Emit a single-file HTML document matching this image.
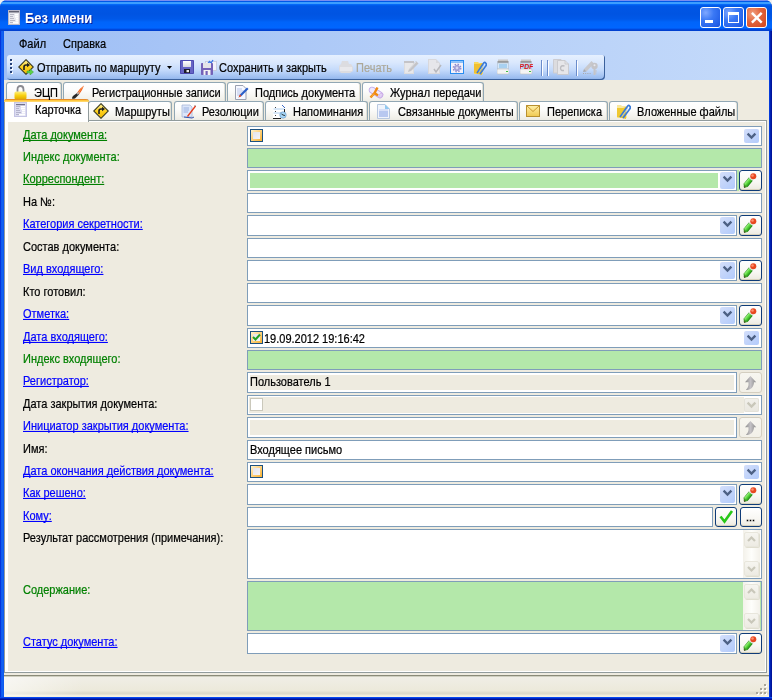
<!DOCTYPE html><html><head><meta charset="utf-8"><style>
html,body{margin:0;padding:0;}
body{width:772px;height:700px;overflow:hidden;position:relative;font-family:"Liberation Sans", sans-serif;font-size:11px;background:#F0F0F0;}
.lb{position:absolute;white-space:nowrap;font-size:11px;will-change:transform;text-decoration-skip-ink:none;-webkit-text-stroke-width:0.2px;transform:scaleY(1.1);transform-origin:0 6px;text-underline-offset:1px;}
.t{position:absolute;white-space:nowrap;font-size:11px;line-height:13px;color:#000;will-change:transform;-webkit-text-stroke-width:0.2px;transform:scaleY(1.1);transform-origin:0 2.5px;}
</style></head><body>
<div style="position:absolute;left:0px;top:0px;width:772px;height:700px;background:linear-gradient(90deg,#0019CF 0,#0A50E8 1px,#1666F6 2px,#0D5AEE 3px,#0655E8 768px,#0846F0 769px,#0030C8 770px,#00139A 771px);border-radius:7px 7px 0 0;"></div>
<div style="position:absolute;left:0px;top:0px;width:772px;height:31px;border-radius:7px 7px 0 0;background:linear-gradient(#7A8EF0 0,#7A8EF0 1px,#0058E8 1px,#0058E8 2px,#3C9EFF 2px,#3C9EFF 4px,#0A70FF 4px,#0062F0 5px,#0056E6 6px,#0054E2 14px,#0058E8 19px,#0064FA 22px,#0066FF 28px,#0050E8 29px,#0050E8 29px,#0040D0 30px,#0040D0 31px);"></div>
<div style="position:absolute;left:8px;top:10px;width:12px;height:15px;"> <svg width="12" height="15" viewBox="0 0 12 15"><rect x="0.5" y="0.5" width="11" height="14" fill="#E8E8EE" stroke="#B8B8C8"/><rect x="1" y="1" width="10" height="1.5" fill="#606070"/><g fill="#B8B8C4"><rect x="2" y="4" width="4" height="1"/><rect x="2" y="6" width="3" height="1"/><rect x="2" y="8" width="4" height="1"/><rect x="2" y="10" width="5" height="1"/><rect x="2" y="12" width="3" height="1"/></g><g fill="#FFFFFF"><rect x="7" y="4" width="3" height="1.5"/><rect x="7" y="6" width="3" height="1.5"/><rect x="8" y="8" width="2" height="1.5"/><rect x="8" y="10" width="2" height="1.5"/><rect x="5" y="12" width="5" height="1.5"/></g></svg></div>
<div style="position:absolute;left:25px;top:8px;height:18px;line-height:18px;font-size:13px;font-weight:bold;color:#fff;text-shadow:1px 1px 0 #0A1E9A;white-space:nowrap;transform:scaleY(1.12);transform-origin:0 0;will-change:transform">Без имени</div>
<div style="position:absolute;left:700px;top:7px;width:21px;height:21px;box-sizing:border-box;border:1px solid #fff;border-radius:3px;background:radial-gradient(circle at 25% 25%,#7FA8FF 0%,#3A78F5 40%,#2360E8 80%,#1A50D8 100%);"><div style="position:absolute;left:4px;top:12px;width:8px;height:3px;background:#fff"></div></div>
<div style="position:absolute;left:723px;top:7px;width:21px;height:21px;box-sizing:border-box;border:1px solid #fff;border-radius:3px;background:radial-gradient(circle at 25% 25%,#7FA8FF 0%,#3A78F5 40%,#2360E8 80%,#1A50D8 100%);"><div style="position:absolute;left:4px;top:4px;width:11px;height:11px;box-sizing:border-box;border:1px solid #fff;border-top-width:3px"></div></div>
<div style="position:absolute;left:746px;top:7px;width:21px;height:21px;box-sizing:border-box;border:1px solid #fff;border-radius:3px;background:radial-gradient(circle at 30% 30%,#F0A080 0%,#E2643C 45%,#D2451D 100%);"><svg width="21" height="21" viewBox="0 0 21 21" style="position:absolute;left:-1px;top:-1px"><path d="M5.9 5.9 L15.7 15.7 M15.7 5.9 L5.9 15.7" stroke="#fff" stroke-width="2.4"/></svg></div>
<div style="position:absolute;left:4px;top:31px;width:765px;height:49px;background:linear-gradient(90deg,#9EBEF5 0%,#C4DAFA 100%);"></div>
<div class="t" style="left:19px;top:37px;">Файл</div>
<div class="t" style="left:63px;top:37px;">Справка</div>
<div style="position:absolute;left:7px;top:55px;width:598px;height:25px;box-sizing:border-box;border-radius:3px 3px 4px 4px;background:linear-gradient(#E6F0FF 0%,#DAE8FD 30%,#C4DAFB 60%,#9DBEF0 90%,#8BB0EA 100%);box-shadow:inset -1px -1px 0 #3B619C;"></div>
<div style="position:absolute;left:11px;top:60px;width:2px;height:2px;background:#FFFFFF;"></div>
<div style="position:absolute;left:10px;top:59px;width:2px;height:2px;background:#274176;"></div>
<div style="position:absolute;left:11px;top:64px;width:2px;height:2px;background:#FFFFFF;"></div>
<div style="position:absolute;left:10px;top:63px;width:2px;height:2px;background:#274176;"></div>
<div style="position:absolute;left:11px;top:68px;width:2px;height:2px;background:#FFFFFF;"></div>
<div style="position:absolute;left:10px;top:67px;width:2px;height:2px;background:#274176;"></div>
<div style="position:absolute;left:11px;top:72px;width:2px;height:2px;background:#FFFFFF;"></div>
<div style="position:absolute;left:10px;top:71px;width:2px;height:2px;background:#274176;"></div>
<svg style="position:absolute;left:18px;top:59px" width="16" height="16" viewBox="0 0 16 16"><defs><linearGradient id="yg" x1="0" y1="0" x2="0" y2="1"><stop offset="0" stop-color="#FFF3A0"/><stop offset="0.5" stop-color="#FFD21E"/><stop offset="1" stop-color="#F0B800"/></linearGradient></defs>
<path d="M8 0.7 L15.3 8 L8 15.3 L0.7 8 Z" fill="url(#yg)" stroke="#3A3A20" stroke-width="1.1"/>
<path d="M6 11 V8 Q6 6 8 6 H9.5" fill="none" stroke="#202020" stroke-width="1.6"/>
<path d="M9 3.8 L12 6 L9 8.2 Z" fill="#202020"/><path d="M9 12 H12 V10 L15.5 13 L12 16 V14 H9 Z" fill="#5CD24A" stroke="#3BA02A" stroke-width="0.5"/></svg>
<div class="t" style="left:37px;top:61px;">Отправить по маршруту</div>
<svg style="position:absolute;left:167px;top:66px" width="6" height="4" viewBox="0 0 6 4"><path d="M0 0 H5 L2.5 3 Z" fill="#000"/></svg>
<svg style="position:absolute;left:180px;top:60px" width="14" height="14" viewBox="0 0 14 14"><defs><linearGradient id="fl" x1="0" y1="0" x2="0" y2="1"><stop offset="0" stop-color="#FFFFFF"/><stop offset="1" stop-color="#D8D8E0"/></linearGradient></defs><rect x="0" y="0" width="14" height="14" rx="0.8" fill="#4C4AB0"/><rect x="1" y="1" width="12" height="12" fill="#6664C4"/><rect x="3" y="1" width="8" height="6" fill="url(#fl)"/><rect x="4" y="9" width="6" height="4" fill="#1C1C28"/><rect x="6.5" y="10" width="2.5" height="2.2" fill="#E8E8E8"/></svg>
<svg style="position:absolute;left:200px;top:59px" width="17" height="16" viewBox="0 0 17 16"><rect x="5.5" y="2.5" width="11" height="9" fill="#F2F2FA" stroke="#C4C8D8" stroke-width="0.8"/><path d="M8 4.5 L9.5 2.5 L11 4 L13 1" fill="none" stroke="#3878E8" stroke-width="1.3"/><rect x="1" y="4" width="12" height="12" rx="0.8" fill="#7462B8"/><rect x="3" y="4" width="8" height="5" fill="#E4E4E8"/><rect x="3.5" y="11" width="7" height="5" fill="#F4F4F4"/><rect x="5.5" y="12" width="2.2" height="4" fill="#7462B8"/></svg>
<div class="t" style="left:219px;top:61px;">Сохранить и закрыть</div>
<svg style="position:absolute;left:339px;top:61px" width="15" height="13" viewBox="0 0 15 13"><path d="M3 0 H9 L10 3 H12 L14 6 V10 L11 12 H2 L0 10 V5 L2 3 Z" fill="#DCDCE0"/><path d="M1 6 H13 V10 H1 Z" fill="#E8E8EC"/></svg>
<div class="t" style="left:356px;top:61px;color:#ACA899">Печать</div>
<svg style="position:absolute;left:403px;top:59px" width="16" height="16" viewBox="0 0 16 16"><rect x="1" y="2" width="10" height="13" fill="#DCDCDE"/><rect x="1" y="2" width="10" height="2" fill="#C4C4C8"/><rect x="2" y="4" width="8" height="10" fill="#E8E8EA"/><path d="M5 13 L6 10 L13 2 L15.5 4.5 L8 12 Z" fill="#C4C4C8"/><path d="M6 10.5 L13 3" stroke="#E4E4E6" stroke-width="0.8"/></svg>
<svg style="position:absolute;left:428px;top:59px" width="14" height="16" viewBox="0 0 14 16"><path d="M0 0 H8 L12 4 V15 H0 Z" fill="#D8D8DC"/><path d="M1 1 H8 V4 H11 V14 H1 Z" fill="#E6E6EA"/><path d="M6 10 L8 13 L13 6" fill="none" stroke="#B8B8BC" stroke-width="1.5"/></svg>
<svg style="position:absolute;left:450px;top:60px" width="14" height="14" viewBox="0 0 14 14"><rect x="0.5" y="0.5" width="13" height="13" fill="#F4F2FA" stroke="#2A8CF0"/><rect x="0" y="0" width="14" height="2.5" fill="#2A8CF0"/><rect x="1" y="1" width="12" height="0.8" fill="#A8D4FF"/><circle cx="7" cy="8" r="3.1" fill="#A09ED4"/><circle cx="7" cy="8" r="3.8" fill="none" stroke="#8C8ACC" stroke-width="1.3" stroke-dasharray="1.5 1.5"/><circle cx="7" cy="8" r="1.4" fill="#D8D6F0"/></svg>
<svg style="position:absolute;left:474px;top:61px" width="13" height="14" viewBox="0 0 13 14"><path d="M0 1 H4 L5 2 H9 V13 H0 Z" fill="#F8D860"/><path d="M0 3 H6 L8 2 V14 L0 12 Z" fill="#F0C030"/><path d="M3 12 L9 3 Q11 0 12 2.5 Q13 4 11 6 L6 13" fill="none" stroke="#3A7AD8" stroke-width="1.6"/><path d="M5 11 L10 4" fill="none" stroke="#8CC0FF" stroke-width="0.8"/></svg>
<svg style="position:absolute;left:497px;top:59px" width="12" height="16" viewBox="0 0 12 16"><rect x="1" y="0.5" width="10" height="2.5" fill="#C8C8C8"/><rect x="0.5" y="2" width="11" height="2" fill="#9A9A9A"/><rect x="0.5" y="4" width="11" height="6" fill="#D8E8F8" stroke="#B0C0D0" stroke-width="0.6"/><rect x="2" y="5" width="8" height="4" fill="#A8D0F0"/><rect x="0" y="10" width="12" height="5" rx="1" fill="#F4F4F4" stroke="#C0C0C0" stroke-width="0.6"/><rect x="9" y="12" width="2" height="1" fill="#40C040"/></svg>
<svg style="position:absolute;left:520px;top:59px" width="13" height="16" viewBox="0 0 13 16"><rect x="1" y="0.5" width="10" height="2.5" fill="#C8C8C8"/><rect x="0.5" y="2" width="11" height="2" fill="#9A9A9A"/><rect x="0.5" y="4" width="11" height="6" fill="#D8E8F8" stroke="#B0C0D0" stroke-width="0.6"/><rect x="2" y="5" width="8" height="4" fill="#A8D0F0"/><rect x="0" y="10" width="12" height="5" rx="1" fill="#F4F4F4" stroke="#C0C0C0" stroke-width="0.6"/><rect x="9" y="12" width="2" height="1" fill="#40C040"/><text x="-0.5" y="9.5" font-family="Liberation Sans" font-weight="bold" font-style="italic" font-size="7" fill="#D81818">PDF</text></svg>
<div style="position:absolute;left:541px;top:60px;width:1px;height:16px;background:#6A8CCB;"></div>
<div style="position:absolute;left:542px;top:61px;width:1px;height:15px;background:#FFFFFF;"></div>
<div style="position:absolute;left:547px;top:60px;width:1px;height:16px;background:#6A8CCB;"></div>
<div style="position:absolute;left:548px;top:61px;width:1px;height:15px;background:#FFFFFF;"></div>
<div style="position:absolute;left:576px;top:60px;width:1px;height:16px;background:#6A8CCB;"></div>
<div style="position:absolute;left:577px;top:61px;width:1px;height:15px;background:#FFFFFF;"></div>
<svg style="position:absolute;left:552px;top:58px" width="18" height="18" viewBox="0 0 18 18"><path d="M1.5 1.5 H9 L12 4.5 V15 H1.5 Z" fill="#DCDCDF" stroke="#CACACE" stroke-width="0.9"/><path d="M5.5 2.5 H13 L16.5 6 V16.5 H5.5 Z" fill="#E6E6E9" stroke="#C8C8CC" stroke-width="0.9"/><path d="M13 2.5 V6 H16.5" fill="none" stroke="#C8C8CC" stroke-width="0.9"/><path d="M12.5 8 Q9 7 8.5 10 Q8.5 13 12 12.5" fill="none" stroke="#BCBCC0" stroke-width="1.4"/></svg>
<svg style="position:absolute;left:582px;top:58px" width="17" height="18" viewBox="0 0 17 18"><path d="M2 11 L9.5 3 L12 5.5 L4.5 13.5 Z" fill="#C8C8CC"/><path d="M2 11 L4.5 13.5 L1 14 Z" fill="#A8A8AC"/><path d="M1 15.5 H9" stroke="#A8A8AC" stroke-dasharray="1 1.2" stroke-width="1"/><circle cx="12.5" cy="8" r="3.2" fill="#C4C4C8"/><circle cx="12.5" cy="7.2" r="1" fill="#E8E8EC"/><path d="M12.5 10 V17" stroke="#C4C4C8" stroke-width="2"/><path d="M13 13 H15 M13 15 H14.5" stroke="#C4C4C8" stroke-width="1.2"/></svg>
<div style="position:absolute;left:4px;top:80px;width:765px;height:617px;background:#EEEBE0;"></div>
<div style="position:absolute;left:6px;top:82px;width:56px;height:20px;box-sizing:border-box;border:1px solid #91A7B4;border-bottom:none;border-radius:3px 3px 0 0;background:linear-gradient(#FFFFFF 0%,#FCFCFB 40%,#F3F2EC 80%,#ECEBE4 100%);box-shadow:inset -1px 0 0 #E2E0D6;"></div>
<div style="position:absolute;left:63px;top:82px;width:163px;height:20px;box-sizing:border-box;border:1px solid #91A7B4;border-bottom:none;border-radius:3px 3px 0 0;background:linear-gradient(#FFFFFF 0%,#FCFCFB 40%,#F3F2EC 80%,#ECEBE4 100%);box-shadow:inset -1px 0 0 #E2E0D6;"></div>
<div style="position:absolute;left:227px;top:82px;width:134px;height:20px;box-sizing:border-box;border:1px solid #91A7B4;border-bottom:none;border-radius:3px 3px 0 0;background:linear-gradient(#FFFFFF 0%,#FCFCFB 40%,#F3F2EC 80%,#ECEBE4 100%);box-shadow:inset -1px 0 0 #E2E0D6;"></div>
<div style="position:absolute;left:362px;top:82px;width:122px;height:20px;box-sizing:border-box;border:1px solid #91A7B4;border-bottom:none;border-radius:3px 3px 0 0;background:linear-gradient(#FFFFFF 0%,#FCFCFB 40%,#F3F2EC 80%,#ECEBE4 100%);box-shadow:inset -1px 0 0 #E2E0D6;"></div>
<div style="position:absolute;left:4px;top:120px;width:763px;height:553px;box-sizing:border-box;border:1px solid #919B9C;background:#FFFFFF;"></div>
<div style="position:absolute;left:8px;top:122px;width:757px;height:549px;background:#EEEBE0;"></div>
<div style="position:absolute;left:88px;top:101px;width:84px;height:19px;box-sizing:border-box;border:1px solid #91A7B4;border-bottom:none;border-radius:3px 3px 0 0;background:linear-gradient(#FFFFFF 0%,#FCFCFB 40%,#F3F2EC 80%,#ECEBE4 100%);box-shadow:inset -1px 0 0 #E2E0D6;"></div>
<div style="position:absolute;left:174px;top:101px;width:90px;height:19px;box-sizing:border-box;border:1px solid #91A7B4;border-bottom:none;border-radius:3px 3px 0 0;background:linear-gradient(#FFFFFF 0%,#FCFCFB 40%,#F3F2EC 80%,#ECEBE4 100%);box-shadow:inset -1px 0 0 #E2E0D6;"></div>
<div style="position:absolute;left:265px;top:101px;width:103px;height:19px;box-sizing:border-box;border:1px solid #91A7B4;border-bottom:none;border-radius:3px 3px 0 0;background:linear-gradient(#FFFFFF 0%,#FCFCFB 40%,#F3F2EC 80%,#ECEBE4 100%);box-shadow:inset -1px 0 0 #E2E0D6;"></div>
<div style="position:absolute;left:369px;top:101px;width:149px;height:19px;box-sizing:border-box;border:1px solid #91A7B4;border-bottom:none;border-radius:3px 3px 0 0;background:linear-gradient(#FFFFFF 0%,#FCFCFB 40%,#F3F2EC 80%,#ECEBE4 100%);box-shadow:inset -1px 0 0 #E2E0D6;"></div>
<div style="position:absolute;left:519px;top:101px;width:89px;height:19px;box-sizing:border-box;border:1px solid #91A7B4;border-bottom:none;border-radius:3px 3px 0 0;background:linear-gradient(#FFFFFF 0%,#FCFCFB 40%,#F3F2EC 80%,#ECEBE4 100%);box-shadow:inset -1px 0 0 #E2E0D6;"></div>
<div style="position:absolute;left:609px;top:101px;width:129px;height:19px;box-sizing:border-box;border:1px solid #91A7B4;border-bottom:none;border-radius:3px 3px 0 0;background:linear-gradient(#FFFFFF 0%,#FCFCFB 40%,#F3F2EC 80%,#ECEBE4 100%);box-shadow:inset -1px 0 0 #E2E0D6;"></div>
<div style="position:absolute;left:4px;top:99px;width:85px;height:23px;box-sizing:border-box;border:1px solid #919B9C;border-bottom:none;border-top:none;border-radius:3px 3px 0 0;background:#FFFFFF;"></div>
<div style="position:absolute;left:4px;top:99px;width:85px;height:3px;border-radius:3px 3px 0 0;background:linear-gradient(#E68B2C 0,#E68B2C 1px,#FFC73C 1px,#FFC73C 2px,#FFD66A 2px);"></div>
<div class="t" style="left:34px;top:86px;">ЭЦП</div>
<div class="t" style="left:92px;top:86px;">Регистрационные записи</div>
<div class="t" style="left:255px;top:86px;">Подпись документа</div>
<div class="t" style="left:390px;top:86px;">Журнал передачи</div>
<div class="t" style="left:35px;top:103px;">Карточка</div>
<div class="t" style="left:115px;top:105px;">Маршруты</div>
<div class="t" style="left:202px;top:105px;">Резолюции</div>
<div class="t" style="left:293px;top:105px;">Напоминания</div>
<div class="t" style="left:398px;top:105px;">Связанные документы</div>
<div class="t" style="left:547px;top:105px;">Переписка</div>
<div class="t" style="left:637px;top:105px;">Вложенные файлы</div>
<svg style="position:absolute;left:14px;top:85px" width="13" height="15" viewBox="0 0 13 15"><path d="M3.5 7 V4.5 Q3.5 1 6.5 1 Q9.5 1 9.5 4.5 V7" fill="none" stroke="#8A8A90" stroke-width="1.8"/><defs><linearGradient id="lk" x1="0" y1="0" x2="0" y2="1"><stop offset="0" stop-color="#FFF080"/><stop offset="0.5" stop-color="#F8D010"/><stop offset="1" stop-color="#E0A800"/></linearGradient></defs><rect x="0.5" y="6.5" width="12" height="8" rx="1.5" fill="url(#lk)"/></svg>
<svg style="position:absolute;left:71px;top:85px" width="14" height="14" viewBox="0 0 14 14"><path d="M13 0.5 Q9 3 6 8 L8 9.5 Q11.5 5 13 0.5 Z" fill="#F05A14"/><path d="M12 2 Q9.5 4.5 7.5 8" stroke="#FFA060" stroke-width="0.8" fill="none"/><path d="M6 8 L8 9.5 L4 13.5 Q1.5 14 1 13.5 Q1 12 2 11 Z" fill="#282828"/><rect x="5.5" y="7.5" width="3" height="1.5" transform="rotate(-45 7 8.2)" fill="#B0B0B0"/></svg>
<svg style="position:absolute;left:235px;top:85px" width="14" height="15" viewBox="0 0 14 15"><path d="M0.5 0.5 H8 L11 3.5 V14.5 H0.5 Z" fill="#F6F8FF" stroke="#9AA0B0"/><g stroke="#B8C4E8" stroke-width="1"><path d="M2 4 H7 M2 6 H9 M2 8 H8 M2 10 H6"/></g><path d="M3.5 12.5 L5 9.5 L12 2.5 L13.5 4 L6.5 11 Z" fill="#2A5EC8"/><path d="M3.5 12.5 L5 9.5 L6.5 11 Z" fill="#F04010"/><path d="M4 12 L5 10 L5.5 10.5 Z" fill="#FF6030"/></svg>
<svg style="position:absolute;left:368px;top:86px" width="16" height="13" viewBox="0 0 16 13"><g transform="rotate(32 8 6.5)"><rect x="0.5" y="3.5" width="15" height="6" rx="3" fill="#F0E8FC" stroke="#C0A8E8" stroke-width="0.9"/><ellipse cx="13.5" cy="6.5" rx="1.6" ry="2.6" fill="#E0D0F4" stroke="#C8A0E0" stroke-width="0.6"/></g><path d="M2.5 11.5 L6.5 7 L9.5 1.5" fill="none" stroke="#F08A10" stroke-width="2.4" stroke-linejoin="round"/><path d="M6.5 7 L10 9.5" stroke="#F08A10" stroke-width="2.2"/><path d="M3.5 10.5 L6 7.5" stroke="#FFC060" stroke-width="0.7"/></svg>
<svg style="position:absolute;left:14px;top:102px" width="13" height="15" viewBox="0 0 13 15"><rect x="0" y="0" width="13" height="15" fill="#C4C4E4"/><rect x="1" y="1" width="11" height="13" fill="#DCDCF0"/><rect x="2" y="2" width="9" height="1.2" fill="#70708A"/><g fill="#B4B4CC"><rect x="2" y="4" width="4" height="1"/><rect x="2" y="6" width="3" height="1"/><rect x="2" y="8" width="4" height="1"/><rect x="2" y="10" width="5" height="1"/><rect x="2" y="12" width="3" height="1"/></g><g fill="#FFFFFF"><rect x="7" y="4" width="4" height="1.5"/><rect x="7" y="6" width="4" height="1.5"/><rect x="8" y="8" width="3" height="1.5"/><rect x="8" y="10" width="3" height="1.5"/><rect x="5" y="12" width="6" height="1.5"/></g></svg>
<svg style="position:absolute;left:93px;top:103px" width="16" height="16" viewBox="0 0 16 16"><defs><linearGradient id="yg" x1="0" y1="0" x2="0" y2="1"><stop offset="0" stop-color="#FFF3A0"/><stop offset="0.5" stop-color="#FFD21E"/><stop offset="1" stop-color="#F0B800"/></linearGradient></defs>
<path d="M8 0.7 L15.3 8 L8 15.3 L0.7 8 Z" fill="url(#yg)" stroke="#3A3A20" stroke-width="1.1"/>
<path d="M6 11 V8 Q6 6 8 6 H9.5" fill="none" stroke="#202020" stroke-width="1.6"/>
<path d="M9 3.8 L12 6 L9 8.2 Z" fill="#202020"/></svg>
<svg style="position:absolute;left:181px;top:104px" width="15" height="15" viewBox="0 0 15 15"><path d="M1 1 H9 L11 3 V13 H1 Z" fill="#DCE6FA" stroke="#A8B8D8" stroke-width="0.8"/><path d="M2.5 4 H8 M2.5 6 H8 M2.5 8 H7" stroke="#9AB0E0"/><path d="M3 13 L11 14 L13 13" stroke="#3050B0" stroke-width="1" fill="none"/><path d="M6 12 L14 1.5 L15 2.5 L7 13 Z" fill="#E83818"/><path d="M14 1.5 L15 2.5" stroke="#404040"/></svg>
<svg style="position:absolute;left:273px;top:104px" width="14" height="15" viewBox="0 0 14 15"><path d="M0 1 H9 L12 4 V14 H0 Z" fill="#FFFFFF"/><path d="M9 1 L12 4" stroke="#3A6AC8" stroke-width="1"/><path d="M0.5 5 H11 M0.5 9 H9" stroke="#B0D0F0" stroke-width="1.2"/><g fill="#404040"><rect x="2" y="3" width="1" height="1"/><rect x="2" y="7" width="1" height="1"/><rect x="2" y="11" width="1" height="1"/></g><rect x="0" y="14" width="8" height="1" fill="#202020"/><circle cx="10" cy="11" r="3.2" fill="#A8D8F8" stroke="#6090C0" stroke-width="0.6"/><path d="M8.5 10 L10 11 L12 11.5" stroke="#202020" stroke-width="0.9" fill="none"/><rect x="11" y="5" width="1" height="3" fill="#202020"/></svg>
<svg style="position:absolute;left:377px;top:104px" width="13" height="15" viewBox="0 0 13 15"><path d="M0.5 0.5 H8 L12.5 5 V14.5 H0.5 Z" fill="#F0F4FC" stroke="#B8C8E0"/><path d="M8 0.5 L12.5 5 H8 Z" fill="#90C8F0"/><rect x="2" y="5" width="9" height="8" fill="#B8C8F0"/><rect x="2" y="5" width="9" height="2" fill="#D8E0F8"/></svg>
<svg style="position:absolute;left:526px;top:105px" width="14" height="12" viewBox="0 0 14 12"><defs><linearGradient id="en" x1="0" y1="0" x2="0" y2="1"><stop offset="0" stop-color="#FFF0A8"/><stop offset="1" stop-color="#F0C850"/></linearGradient></defs><rect x="0.5" y="0.5" width="13" height="11" fill="url(#en)" stroke="#B89030"/><path d="M0.5 0.5 L7 6.5 L13.5 0.5" fill="none" stroke="#C89830"/></svg>
<svg style="position:absolute;left:617px;top:104px" width="14" height="15" viewBox="0 0 14 15"><path d="M0 1 H4 L5 2 H10 V14 H0 Z" fill="#F8E8A0"/><path d="M0 4 H6 L9 3 V15 L0 13 Z" fill="#F0C830"/><path d="M3 13 L10 3 Q12 0 13 2.5 Q14 4 12 6 L6 14" fill="none" stroke="#3A7AD8" stroke-width="1.7"/><path d="M5 12 L11 4" stroke="#9CC8FF" stroke-width="0.7"/></svg>
<div class="lb" style="left:23px;top:124px;height:20px;line-height:20px;color:#008000;text-decoration:underline;">Дата документа:</div>
<div style="position:absolute;left:247px;top:126px;width:515px;height:20px;box-sizing:border-box;border:1px solid #7F9DB9;background:#fff;"></div>
<div style="position:absolute;left:250px;top:129px;width:13px;height:13px;box-sizing:border-box;border:1px solid #1C5180;background:#fff;"><div style="position:absolute;left:0px;top:0px;width:11px;height:11px;background:linear-gradient(135deg,#FFF4D0 0%,#FFD78A 40%,#F8B030 100%);"></div><div style="position:absolute;left:2px;top:2px;width:7px;height:7px;background:linear-gradient(135deg,#E4E4EA,#F4F4F8);"></div></div>
<div style="position:absolute;left:744px;top:129px;width:15px;height:14px;background:linear-gradient(135deg,#D4DFFB 0%,#C2D4FA 50%,#B2CBFC 100%);border-radius:2px;"><svg width="15" height="14" viewBox="0 0 15 14" style="position:absolute;left:0;top:0"><path d="M3.6 4.6 L7.5 8.5 L11.4 4.6" fill="none" stroke="#4D6185" stroke-width="2.3" stroke-linecap="butt"/></svg></div>
<div class="lb" style="left:23px;top:146px;height:20px;line-height:20px;color:#008000;">Индекс документа:</div>
<div style="position:absolute;left:247px;top:148px;width:515px;height:20px;box-sizing:border-box;border:1px solid #7F9DB9;background:#B4E8AA;"></div>
<div class="lb" style="left:23px;top:168px;height:20px;line-height:20px;color:#008000;text-decoration:underline;">Корреспондент:</div>
<div style="position:absolute;left:737px;top:170px;width:2px;height:21px;background:#B4E8AA;"></div>
<div style="position:absolute;left:247px;top:170px;width:490px;height:21px;box-sizing:border-box;border:1px solid #7F9DB9;background:#fff;"></div>
<div style="position:absolute;left:250px;top:173px;width:468px;height:15px;background:#B4E8AA;"></div>
<div style="position:absolute;left:720px;top:172px;width:15px;height:17px;background:linear-gradient(135deg,#D4DFFB 0%,#C2D4FA 50%,#B2CBFC 100%);border-radius:2px;"><svg width="15" height="14" viewBox="0 0 15 14" style="position:absolute;left:0;top:0"><path d="M3.6 4.6 L7.5 8.5 L11.4 4.6" fill="none" stroke="#4D6185" stroke-width="2.3" stroke-linecap="butt"/></svg></div>
<div style="position:absolute;left:739px;top:170px;width:23px;height:21px;box-sizing:border-box;border:1px solid #0F3C78;border-radius:3px;background:linear-gradient(#FFFFFF 0%,#F8F7F3 60%,#ECEAE0 100%);box-shadow:inset 0 -1px 0 #D8D2BD;"><svg width="23" height="21" viewBox="0 0 23 21" style="position:absolute;left:-1px;top:-1px">
<defs><linearGradient id="pg" gradientUnits="userSpaceOnUse" x1="4.8" y1="13.9" x2="8.4" y2="16.9"><stop offset="0" stop-color="#A8F890"/><stop offset="0.45" stop-color="#5AD83C"/><stop offset="1" stop-color="#1E8C14"/></linearGradient></defs>
<path d="M6.6 15.4 L11.8 9.2" stroke="#2A8A1A" stroke-width="5.2"/>
<path d="M6.6 15.4 L11.8 9.2" stroke="url(#pg)" stroke-width="4.2"/>
<path d="M5 17.8 L4.5 13.6 L8.6 17.0 Z" fill="#3A9A22"/>
<path d="M5 17.8 L4.8 15.9 L6.7 17.4 Z" fill="#4A3A2A"/>
<path d="M11.6 9.4 L12.9 7.9" stroke="#E0E0E0" stroke-width="4.4"/>
<circle cx="14.3" cy="6.3" r="3" fill="#E84820"/>
<circle cx="13.5" cy="5.5" r="1.3" fill="#FF9070"/>
</svg></div>
<div class="lb" style="left:23px;top:191px;height:20px;line-height:20px;color:#000000;">На №:</div>
<div style="position:absolute;left:247px;top:193px;width:515px;height:20px;box-sizing:border-box;border:1px solid #7F9DB9;background:#fff;"></div>
<div class="lb" style="left:23px;top:213px;height:20px;line-height:20px;color:#0000FF;text-decoration:underline;">Категория секретности:</div>
<div style="position:absolute;left:247px;top:215px;width:490px;height:21px;box-sizing:border-box;border:1px solid #7F9DB9;background:#fff;"></div>
<div style="position:absolute;left:720px;top:217px;width:15px;height:17px;background:linear-gradient(135deg,#D4DFFB 0%,#C2D4FA 50%,#B2CBFC 100%);border-radius:2px;"><svg width="15" height="14" viewBox="0 0 15 14" style="position:absolute;left:0;top:0"><path d="M3.6 4.6 L7.5 8.5 L11.4 4.6" fill="none" stroke="#4D6185" stroke-width="2.3" stroke-linecap="butt"/></svg></div>
<div style="position:absolute;left:739px;top:215px;width:23px;height:21px;box-sizing:border-box;border:1px solid #0F3C78;border-radius:3px;background:linear-gradient(#FFFFFF 0%,#F8F7F3 60%,#ECEAE0 100%);box-shadow:inset 0 -1px 0 #D8D2BD;"><svg width="23" height="21" viewBox="0 0 23 21" style="position:absolute;left:-1px;top:-1px">
<defs><linearGradient id="pg" gradientUnits="userSpaceOnUse" x1="4.8" y1="13.9" x2="8.4" y2="16.9"><stop offset="0" stop-color="#A8F890"/><stop offset="0.45" stop-color="#5AD83C"/><stop offset="1" stop-color="#1E8C14"/></linearGradient></defs>
<path d="M6.6 15.4 L11.8 9.2" stroke="#2A8A1A" stroke-width="5.2"/>
<path d="M6.6 15.4 L11.8 9.2" stroke="url(#pg)" stroke-width="4.2"/>
<path d="M5 17.8 L4.5 13.6 L8.6 17.0 Z" fill="#3A9A22"/>
<path d="M5 17.8 L4.8 15.9 L6.7 17.4 Z" fill="#4A3A2A"/>
<path d="M11.6 9.4 L12.9 7.9" stroke="#E0E0E0" stroke-width="4.4"/>
<circle cx="14.3" cy="6.3" r="3" fill="#E84820"/>
<circle cx="13.5" cy="5.5" r="1.3" fill="#FF9070"/>
</svg></div>
<div class="lb" style="left:23px;top:236px;height:20px;line-height:20px;color:#000000;">Состав документа:</div>
<div style="position:absolute;left:247px;top:238px;width:515px;height:20px;box-sizing:border-box;border:1px solid #7F9DB9;background:#fff;"></div>
<div class="lb" style="left:23px;top:258px;height:20px;line-height:20px;color:#0000FF;text-decoration:underline;">Вид входящего:</div>
<div style="position:absolute;left:247px;top:260px;width:490px;height:21px;box-sizing:border-box;border:1px solid #7F9DB9;background:#fff;"></div>
<div style="position:absolute;left:720px;top:262px;width:15px;height:17px;background:linear-gradient(135deg,#D4DFFB 0%,#C2D4FA 50%,#B2CBFC 100%);border-radius:2px;"><svg width="15" height="14" viewBox="0 0 15 14" style="position:absolute;left:0;top:0"><path d="M3.6 4.6 L7.5 8.5 L11.4 4.6" fill="none" stroke="#4D6185" stroke-width="2.3" stroke-linecap="butt"/></svg></div>
<div style="position:absolute;left:739px;top:260px;width:23px;height:21px;box-sizing:border-box;border:1px solid #0F3C78;border-radius:3px;background:linear-gradient(#FFFFFF 0%,#F8F7F3 60%,#ECEAE0 100%);box-shadow:inset 0 -1px 0 #D8D2BD;"><svg width="23" height="21" viewBox="0 0 23 21" style="position:absolute;left:-1px;top:-1px">
<defs><linearGradient id="pg" gradientUnits="userSpaceOnUse" x1="4.8" y1="13.9" x2="8.4" y2="16.9"><stop offset="0" stop-color="#A8F890"/><stop offset="0.45" stop-color="#5AD83C"/><stop offset="1" stop-color="#1E8C14"/></linearGradient></defs>
<path d="M6.6 15.4 L11.8 9.2" stroke="#2A8A1A" stroke-width="5.2"/>
<path d="M6.6 15.4 L11.8 9.2" stroke="url(#pg)" stroke-width="4.2"/>
<path d="M5 17.8 L4.5 13.6 L8.6 17.0 Z" fill="#3A9A22"/>
<path d="M5 17.8 L4.8 15.9 L6.7 17.4 Z" fill="#4A3A2A"/>
<path d="M11.6 9.4 L12.9 7.9" stroke="#E0E0E0" stroke-width="4.4"/>
<circle cx="14.3" cy="6.3" r="3" fill="#E84820"/>
<circle cx="13.5" cy="5.5" r="1.3" fill="#FF9070"/>
</svg></div>
<div class="lb" style="left:23px;top:281px;height:20px;line-height:20px;color:#000000;">Кто готовил:</div>
<div style="position:absolute;left:247px;top:283px;width:515px;height:20px;box-sizing:border-box;border:1px solid #7F9DB9;background:#fff;"></div>
<div class="lb" style="left:23px;top:303px;height:20px;line-height:20px;color:#0000FF;text-decoration:underline;">Отметка:</div>
<div style="position:absolute;left:247px;top:305px;width:490px;height:21px;box-sizing:border-box;border:1px solid #7F9DB9;background:#fff;"></div>
<div style="position:absolute;left:720px;top:307px;width:15px;height:17px;background:linear-gradient(135deg,#D4DFFB 0%,#C2D4FA 50%,#B2CBFC 100%);border-radius:2px;"><svg width="15" height="14" viewBox="0 0 15 14" style="position:absolute;left:0;top:0"><path d="M3.6 4.6 L7.5 8.5 L11.4 4.6" fill="none" stroke="#4D6185" stroke-width="2.3" stroke-linecap="butt"/></svg></div>
<div style="position:absolute;left:739px;top:305px;width:23px;height:21px;box-sizing:border-box;border:1px solid #0F3C78;border-radius:3px;background:linear-gradient(#FFFFFF 0%,#F8F7F3 60%,#ECEAE0 100%);box-shadow:inset 0 -1px 0 #D8D2BD;"><svg width="23" height="21" viewBox="0 0 23 21" style="position:absolute;left:-1px;top:-1px">
<defs><linearGradient id="pg" gradientUnits="userSpaceOnUse" x1="4.8" y1="13.9" x2="8.4" y2="16.9"><stop offset="0" stop-color="#A8F890"/><stop offset="0.45" stop-color="#5AD83C"/><stop offset="1" stop-color="#1E8C14"/></linearGradient></defs>
<path d="M6.6 15.4 L11.8 9.2" stroke="#2A8A1A" stroke-width="5.2"/>
<path d="M6.6 15.4 L11.8 9.2" stroke="url(#pg)" stroke-width="4.2"/>
<path d="M5 17.8 L4.5 13.6 L8.6 17.0 Z" fill="#3A9A22"/>
<path d="M5 17.8 L4.8 15.9 L6.7 17.4 Z" fill="#4A3A2A"/>
<path d="M11.6 9.4 L12.9 7.9" stroke="#E0E0E0" stroke-width="4.4"/>
<circle cx="14.3" cy="6.3" r="3" fill="#E84820"/>
<circle cx="13.5" cy="5.5" r="1.3" fill="#FF9070"/>
</svg></div>
<div class="lb" style="left:23px;top:326px;height:20px;line-height:20px;color:#0000FF;text-decoration:underline;">Дата входящего:</div>
<div style="position:absolute;left:247px;top:328px;width:515px;height:20px;box-sizing:border-box;border:1px solid #7F9DB9;background:#fff;"></div>
<div style="position:absolute;left:250px;top:331px;width:13px;height:13px;box-sizing:border-box;border:1px solid #1C5180;background:#fff;"><div style="position:absolute;left:0px;top:0px;width:11px;height:11px;background:linear-gradient(135deg,#FFF4D0 0%,#FFD78A 40%,#F8B030 100%);"></div><div style="position:absolute;left:2px;top:2px;width:7px;height:7px;background:linear-gradient(135deg,#E4E4EA,#F4F4F8);"></div><svg width="13" height="13" viewBox="0 0 13 13" style="position:absolute;left:-1px;top:-1px"><path d="M3 6 L5.5 8.5 L10 3.5" fill="none" stroke="#21A121" stroke-width="2"/></svg></div>
<div style="position:absolute;left:744px;top:331px;width:15px;height:14px;background:linear-gradient(135deg,#D4DFFB 0%,#C2D4FA 50%,#B2CBFC 100%);border-radius:2px;"><svg width="15" height="14" viewBox="0 0 15 14" style="position:absolute;left:0;top:0"><path d="M3.6 4.6 L7.5 8.5 L11.4 4.6" fill="none" stroke="#4D6185" stroke-width="2.3" stroke-linecap="butt"/></svg></div>
<div class="t" style="left:264px;top:332px;">19.09.2012 19:16:42</div>
<div class="lb" style="left:23px;top:348px;height:20px;line-height:20px;color:#008000;">Индекс входящего:</div>
<div style="position:absolute;left:247px;top:350px;width:515px;height:20px;box-sizing:border-box;border:1px solid #7F9DB9;background:#B4E8AA;"></div>
<div class="lb" style="left:23px;top:370px;height:20px;line-height:20px;color:#0000FF;text-decoration:underline;">Регистратор:</div>
<div style="position:absolute;left:247px;top:372px;width:490px;height:21px;box-sizing:border-box;border:1px solid #7F9DB9;background:#fff;"></div>
<div style="position:absolute;left:250px;top:375px;width:484px;height:15px;background:#EEEBE0;"></div>
<div class="t" style="left:250px;top:375px;">Пользователь 1</div>
<div style="position:absolute;left:739px;top:372px;width:23px;height:21px;box-sizing:border-box;border:1px solid #D3CEC0;border-radius:3px;background:linear-gradient(#F7F6F0,#F2F0E8);"><svg width="23" height="21" viewBox="0 0 23 21" style="position:absolute;left:-1px;top:-1px"><defs><linearGradient id="au1" x1="0" y1="0" x2="1" y2="0"><stop offset="0" stop-color="#8C8C8C"/><stop offset="0.5" stop-color="#C4C2C6"/><stop offset="1" stop-color="#8A8A8A"/></linearGradient></defs><path d="M11.4 4 L17.2 10.3 H15 Q15 15 11 17.3 Q8.5 18.2 7 17.7 Q10 15 9.5 10.2 H6 Z" fill="url(#au1)"/></svg></div>
<div class="lb" style="left:23px;top:393px;height:20px;line-height:20px;color:#000000;">Дата закрытия документа:</div>
<div style="position:absolute;left:247px;top:395px;width:515px;height:20px;box-sizing:border-box;border:1px solid #7F9DB9;background:#fff;"></div>
<div style="position:absolute;left:249px;top:397px;width:495px;height:16px;background:#EEEBE0;"></div>
<div style="position:absolute;left:250px;top:398px;width:13px;height:13px;box-sizing:border-box;border:1px solid #CAC8BB;background:#FFFFFF;"></div>
<div style="position:absolute;left:744px;top:398px;width:15px;height:14px;background:linear-gradient(#F2F1EC,#E9E7DF);border-radius:2px;box-shadow:inset 0 0 0 1px #E4E2D8;"><svg width="15" height="14" viewBox="0 0 15 14" style="position:absolute;left:0;top:0"><path d="M3.6 4.6 L7.5 8.5 L11.4 4.6" fill="none" stroke="#C9C7BA" stroke-width="2.3" stroke-linecap="butt"/></svg></div>
<div class="lb" style="left:23px;top:415px;height:20px;line-height:20px;color:#0000FF;text-decoration:underline;">Инициатор закрытия документа:</div>
<div style="position:absolute;left:247px;top:417px;width:490px;height:21px;box-sizing:border-box;border:1px solid #7F9DB9;background:#fff;"></div>
<div style="position:absolute;left:250px;top:420px;width:484px;height:15px;background:#EEEBE0;"></div>
<div style="position:absolute;left:739px;top:417px;width:23px;height:21px;box-sizing:border-box;border:1px solid #D3CEC0;border-radius:3px;background:linear-gradient(#F7F6F0,#F2F0E8);"><svg width="23" height="21" viewBox="0 0 23 21" style="position:absolute;left:-1px;top:-1px"><defs><linearGradient id="au2" x1="0" y1="0" x2="1" y2="0"><stop offset="0" stop-color="#8C8C8C"/><stop offset="0.5" stop-color="#C4C2C6"/><stop offset="1" stop-color="#8A8A8A"/></linearGradient></defs><path d="M11.4 4 L17.2 10.3 H15 Q15 15 11 17.3 Q8.5 18.2 7 17.7 Q10 15 9.5 10.2 H6 Z" fill="url(#au2)"/></svg></div>
<div class="lb" style="left:23px;top:438px;height:20px;line-height:20px;color:#000000;">Имя:</div>
<div style="position:absolute;left:247px;top:440px;width:515px;height:20px;box-sizing:border-box;border:1px solid #7F9DB9;background:#fff;"></div>
<div class="t" style="left:250px;top:443px;">Входящее письмо</div>
<div class="lb" style="left:23px;top:460px;height:20px;line-height:20px;color:#0000FF;text-decoration:underline;">Дата окончания действия документа:</div>
<div style="position:absolute;left:247px;top:462px;width:515px;height:20px;box-sizing:border-box;border:1px solid #7F9DB9;background:#fff;"></div>
<div style="position:absolute;left:250px;top:465px;width:13px;height:13px;box-sizing:border-box;border:1px solid #1C5180;background:#fff;"><div style="position:absolute;left:0px;top:0px;width:11px;height:11px;background:linear-gradient(135deg,#FFF4D0 0%,#FFD78A 40%,#F8B030 100%);"></div><div style="position:absolute;left:2px;top:2px;width:7px;height:7px;background:linear-gradient(135deg,#E4E4EA,#F4F4F8);"></div></div>
<div style="position:absolute;left:744px;top:465px;width:15px;height:14px;background:linear-gradient(135deg,#D4DFFB 0%,#C2D4FA 50%,#B2CBFC 100%);border-radius:2px;"><svg width="15" height="14" viewBox="0 0 15 14" style="position:absolute;left:0;top:0"><path d="M3.6 4.6 L7.5 8.5 L11.4 4.6" fill="none" stroke="#4D6185" stroke-width="2.3" stroke-linecap="butt"/></svg></div>
<div class="lb" style="left:23px;top:482px;height:20px;line-height:20px;color:#0000FF;text-decoration:underline;">Как решено:</div>
<div style="position:absolute;left:247px;top:484px;width:490px;height:21px;box-sizing:border-box;border:1px solid #7F9DB9;background:#fff;"></div>
<div style="position:absolute;left:720px;top:486px;width:15px;height:17px;background:linear-gradient(135deg,#D4DFFB 0%,#C2D4FA 50%,#B2CBFC 100%);border-radius:2px;"><svg width="15" height="14" viewBox="0 0 15 14" style="position:absolute;left:0;top:0"><path d="M3.6 4.6 L7.5 8.5 L11.4 4.6" fill="none" stroke="#4D6185" stroke-width="2.3" stroke-linecap="butt"/></svg></div>
<div style="position:absolute;left:739px;top:484px;width:23px;height:21px;box-sizing:border-box;border:1px solid #0F3C78;border-radius:3px;background:linear-gradient(#FFFFFF 0%,#F8F7F3 60%,#ECEAE0 100%);box-shadow:inset 0 -1px 0 #D8D2BD;"><svg width="23" height="21" viewBox="0 0 23 21" style="position:absolute;left:-1px;top:-1px">
<defs><linearGradient id="pg" gradientUnits="userSpaceOnUse" x1="4.8" y1="13.9" x2="8.4" y2="16.9"><stop offset="0" stop-color="#A8F890"/><stop offset="0.45" stop-color="#5AD83C"/><stop offset="1" stop-color="#1E8C14"/></linearGradient></defs>
<path d="M6.6 15.4 L11.8 9.2" stroke="#2A8A1A" stroke-width="5.2"/>
<path d="M6.6 15.4 L11.8 9.2" stroke="url(#pg)" stroke-width="4.2"/>
<path d="M5 17.8 L4.5 13.6 L8.6 17.0 Z" fill="#3A9A22"/>
<path d="M5 17.8 L4.8 15.9 L6.7 17.4 Z" fill="#4A3A2A"/>
<path d="M11.6 9.4 L12.9 7.9" stroke="#E0E0E0" stroke-width="4.4"/>
<circle cx="14.3" cy="6.3" r="3" fill="#E84820"/>
<circle cx="13.5" cy="5.5" r="1.3" fill="#FF9070"/>
</svg></div>
<div class="lb" style="left:23px;top:505px;height:20px;line-height:20px;color:#0000FF;text-decoration:underline;">Кому:</div>
<div style="position:absolute;left:247px;top:507px;width:466px;height:20px;box-sizing:border-box;border:1px solid #7F9DB9;background:#fff;"></div>
<div style="position:absolute;left:715px;top:507px;width:22px;height:20px;box-sizing:border-box;border:1px solid #0F3C78;border-radius:3px;background:linear-gradient(#FFFFFF 0%,#F8F7F3 60%,#ECEAE0 100%);box-shadow:inset 0 -1px 0 #D8D2BD;"><svg width="22" height="20" viewBox="0 0 22 20" style="position:absolute;left:-1px;top:-1px"><path d="M5.5 9.5 L9.5 14.5 L17 4" fill="none" stroke="#28C818" stroke-width="2.6"/></svg></div>
<div style="position:absolute;left:740px;top:507px;width:22px;height:20px;box-sizing:border-box;border:1px solid #0F3C78;border-radius:3px;background:linear-gradient(#FFFFFF 0%,#F8F7F3 60%,#ECEAE0 100%);box-shadow:inset 0 -1px 0 #D8D2BD;"><div style="position:absolute;left:6px;top:12px;width:1px;height:1px;background:#000;box-shadow:3px 0 0 #000,6px 0 0 #000,0 0 0 0.4px #555,3px 0 0 0.4px #555,6px 0 0 0.4px #555"></div></div>
<div class="lb" style="left:23px;top:527px;height:20px;line-height:20px;color:#000000;">Результат рассмотрения (примечания):</div>
<div style="position:absolute;left:247px;top:529px;width:515px;height:50px;box-sizing:border-box;border:1px solid #7F9DB9;background:#fff;"></div>
<div style="position:absolute;left:743px;top:530px;width:17px;height:48px;background:linear-gradient(90deg,#F3F1EA,#FEFEFB 50%,#F3F1EA);"></div><div style="position:absolute;left:744px;top:532px;width:15px;height:15px;box-sizing:border-box;border:1px solid #E8E6DC;border-radius:2px;background:linear-gradient(#F6F5F0,#EDEBE3);box-shadow:1px 1px 0 #E0DED0;"><svg width="15" height="15" viewBox="0 0 15 15" style="position:absolute;left:-1px;top:-1px"><path d="M4 9 L7.5 5.5 L11 9" fill="none" stroke="#C9C7BA" stroke-width="2.2"/></svg></div><div style="position:absolute;left:744px;top:561px;width:15px;height:15px;box-sizing:border-box;border:1px solid #E8E6DC;border-radius:2px;background:linear-gradient(#F6F5F0,#EDEBE3);box-shadow:1px 1px 0 #E0DED0;"><svg width="15" height="15" viewBox="0 0 15 15" style="position:absolute;left:-1px;top:-1px"><path d="M4 6 L7.5 9.5 L11 6" fill="none" stroke="#C9C7BA" stroke-width="2.2"/></svg></div>
<div class="lb" style="left:23px;top:579px;height:20px;line-height:20px;color:#008000;">Содержание:</div>
<div style="position:absolute;left:247px;top:581px;width:515px;height:50px;box-sizing:border-box;border:1px solid #7F9DB9;background:#B4E8AA;"></div>
<div style="position:absolute;left:743px;top:582px;width:17px;height:48px;background:linear-gradient(90deg,#F3F1EA,#FEFEFB 50%,#F3F1EA);"></div><div style="position:absolute;left:744px;top:584px;width:15px;height:15px;box-sizing:border-box;border:1px solid #E8E6DC;border-radius:2px;background:linear-gradient(#F6F5F0,#EDEBE3);box-shadow:1px 1px 0 #E0DED0;"><svg width="15" height="15" viewBox="0 0 15 15" style="position:absolute;left:-1px;top:-1px"><path d="M4 9 L7.5 5.5 L11 9" fill="none" stroke="#C9C7BA" stroke-width="2.2"/></svg></div><div style="position:absolute;left:744px;top:613px;width:15px;height:15px;box-sizing:border-box;border:1px solid #E8E6DC;border-radius:2px;background:linear-gradient(#F6F5F0,#EDEBE3);box-shadow:1px 1px 0 #E0DED0;"><svg width="15" height="15" viewBox="0 0 15 15" style="position:absolute;left:-1px;top:-1px"><path d="M4 6 L7.5 9.5 L11 6" fill="none" stroke="#C9C7BA" stroke-width="2.2"/></svg></div>
<div class="lb" style="left:23px;top:631px;height:20px;line-height:20px;color:#0000FF;text-decoration:underline;">Статус документа:</div>
<div style="position:absolute;left:247px;top:633px;width:490px;height:21px;box-sizing:border-box;border:1px solid #7F9DB9;background:#fff;"></div>
<div style="position:absolute;left:720px;top:635px;width:15px;height:17px;background:linear-gradient(135deg,#D4DFFB 0%,#C2D4FA 50%,#B2CBFC 100%);border-radius:2px;"><svg width="15" height="14" viewBox="0 0 15 14" style="position:absolute;left:0;top:0"><path d="M3.6 4.6 L7.5 8.5 L11.4 4.6" fill="none" stroke="#4D6185" stroke-width="2.3" stroke-linecap="butt"/></svg></div>
<div style="position:absolute;left:739px;top:633px;width:23px;height:21px;box-sizing:border-box;border:1px solid #0F3C78;border-radius:3px;background:linear-gradient(#FFFFFF 0%,#F8F7F3 60%,#ECEAE0 100%);box-shadow:inset 0 -1px 0 #D8D2BD;"><svg width="23" height="21" viewBox="0 0 23 21" style="position:absolute;left:-1px;top:-1px">
<defs><linearGradient id="pg" gradientUnits="userSpaceOnUse" x1="4.8" y1="13.9" x2="8.4" y2="16.9"><stop offset="0" stop-color="#A8F890"/><stop offset="0.45" stop-color="#5AD83C"/><stop offset="1" stop-color="#1E8C14"/></linearGradient></defs>
<path d="M6.6 15.4 L11.8 9.2" stroke="#2A8A1A" stroke-width="5.2"/>
<path d="M6.6 15.4 L11.8 9.2" stroke="url(#pg)" stroke-width="4.2"/>
<path d="M5 17.8 L4.5 13.6 L8.6 17.0 Z" fill="#3A9A22"/>
<path d="M5 17.8 L4.8 15.9 L6.7 17.4 Z" fill="#4A3A2A"/>
<path d="M11.6 9.4 L12.9 7.9" stroke="#E0E0E0" stroke-width="4.4"/>
<circle cx="14.3" cy="6.3" r="3" fill="#E84820"/>
<circle cx="13.5" cy="5.5" r="1.3" fill="#FF9070"/>
</svg></div>
<div style="position:absolute;left:4px;top:673px;width:765px;height:24px;background:linear-gradient(#EEEBE0 0,#EEEBE0 2px,#8A8A78 2px,#8A8A78 3px,#CFCFC0 3px,#CFCFC0 4px,#F0EEE6 4px,#ECE9DA 18px,#E2DFD0 19px,#DCD8C8 21px,#F0ECDC 22px,#F8F4E4 24px);"></div>
<div style="position:absolute;left:4px;top:677px;width:80px;height:19px;background:linear-gradient(90deg,rgba(255,255,255,0.55),rgba(255,255,255,0));"></div>
<div style="position:absolute;left:0px;top:697px;width:772px;height:3px;background:linear-gradient(#0848F0 0,#0848F0 1px,#0028C0 1px,#0028C0 2px,#001098 2px);"></div>
<div style="position:absolute;left:765px;top:685px;width:2px;height:2px;background:#FFFFFF;"></div>
<div style="position:absolute;left:764px;top:684px;width:2px;height:2px;background:#A8A498;"></div>
<div style="position:absolute;left:761px;top:689px;width:2px;height:2px;background:#FFFFFF;"></div>
<div style="position:absolute;left:760px;top:688px;width:2px;height:2px;background:#A8A498;"></div>
<div style="position:absolute;left:765px;top:689px;width:2px;height:2px;background:#FFFFFF;"></div>
<div style="position:absolute;left:764px;top:688px;width:2px;height:2px;background:#A8A498;"></div>
<div style="position:absolute;left:757px;top:693px;width:2px;height:2px;background:#FFFFFF;"></div>
<div style="position:absolute;left:756px;top:692px;width:2px;height:2px;background:#A8A498;"></div>
<div style="position:absolute;left:761px;top:693px;width:2px;height:2px;background:#FFFFFF;"></div>
<div style="position:absolute;left:760px;top:692px;width:2px;height:2px;background:#A8A498;"></div>
<div style="position:absolute;left:765px;top:693px;width:2px;height:2px;background:#FFFFFF;"></div>
<div style="position:absolute;left:764px;top:692px;width:2px;height:2px;background:#A8A498;"></div>
</body></html>
